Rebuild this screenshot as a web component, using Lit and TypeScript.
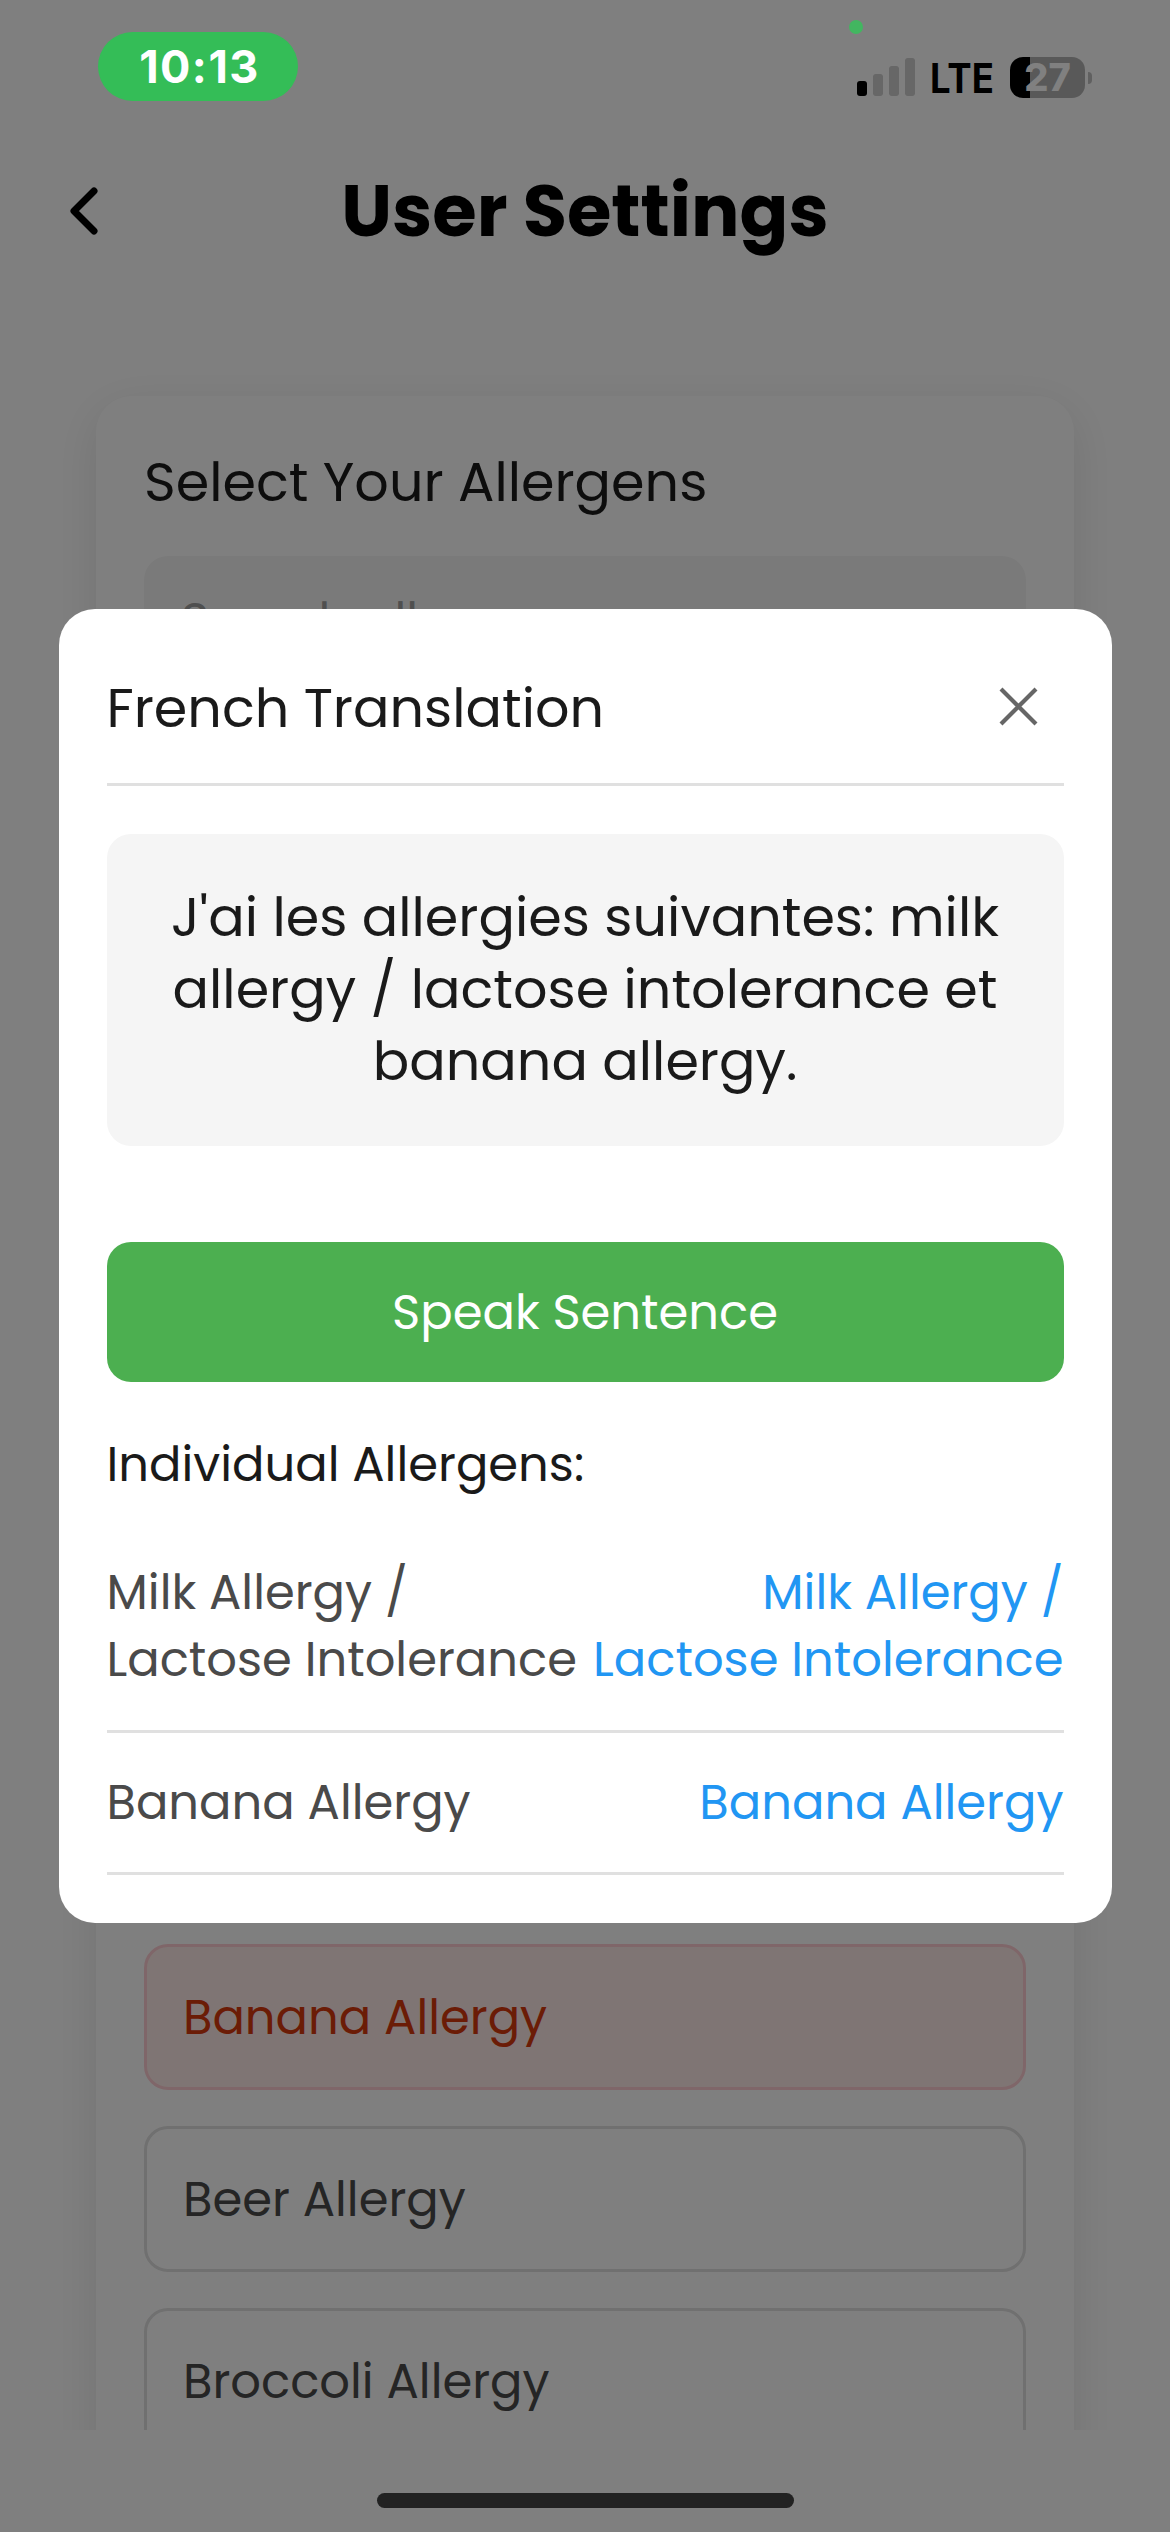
import { LitElement, html, css, svg } from "lit";
import { customElement, property } from "lit/decorators.js";
import { classMap } from "lit/directives/class-map.js";

interface Allergen {
  name: string;
  selected: boolean;
}

interface Translation {
  source: string;
  translated: string;
}

const ALLERGENS: Allergen[] = [
  { name: "Banana Allergy", selected: true },
  { name: "Beer Allergy", selected: false },
  { name: "Broccoli Allergy", selected: false },
];

const TRANSLATIONS: Translation[] = [
  {
    source: "Milk Allergy / Lactose Intolerance",
    translated: "Milk Allergy / Lactose Intolerance",
  },
  { source: "Banana Allergy", translated: "Banana Allergy" },
];

/** Clock pill, signal bars, carrier label and battery. */
@customElement("status-bar")
export class StatusBar extends LitElement {
  @property() time = "";
  @property() network = "";
  @property({ type: Number }) battery = 0;
  @property({ type: Number }) signal = 0;

  static styles = css`
    :host {
      display: flex;
      justify-content: space-between;
      align-items: flex-start;
      box-sizing: border-box;
      height: 140px;
      padding: 32px 78px 0 98px;
      font-family: Inter, "Liberation Sans", sans-serif;
    }
    .time {
      display: flex;
      align-items: center;
      justify-content: center;
      box-sizing: border-box;
      width: 200px;
      height: 69px;
      padding: 0 0 1px 3px;
      border-radius: 35px;
      background: #34bd57;
      color: #fff;
      font-size: 45px;
      font-weight: 650;
      letter-spacing: 1.5px;
    }
    .right {
      position: relative;
      display: flex;
      align-items: center;
      height: 41px;
      margin-top: 25px;
    }
    .dot {
      position: absolute;
      left: -8px;
      top: -37px;
      width: 14px;
      height: 14px;
      border-radius: 50%;
      background: #42b660;
    }
    .bars {
      width: 59px;
      height: 38px;
      margin-top: -2px;
    }
    .network {
      width: 64px;
      margin: 1px 0 0 14px;
      font-size: 41px;
      line-height: 41px;
      font-weight: 700;
      transform: scaleX(0.89);
      transform-origin: left;
    }
    .cell {
      display: flex;
      align-items: center;
      justify-content: center;
      width: 75px;
      height: 41px;
      margin-left: 16px;
      border-radius: 13px;
      background: linear-gradient(90deg, #000 27%, #595959 27%);
      color: #808080;
      font-size: 38px;
      font-weight: 800;
      line-height: 41px;
    }
    .nub {
      width: 4px;
      height: 12px;
      margin-left: 3px;
      border-radius: 0 4px 4px 0;
      background: #606060;
    }
  `;

  render() {
    const tops = [15, 8, 0, -8];
    return html`
      <div class="time">${this.time}</div>
      <div class="right">
        <i class="dot"></i>
        <svg class="bars" viewBox="0 -8 59 38">
          ${tops.map(
            (y, i) => svg`<rect x=${i * 16} y=${y} width="10" height=${30 - y} rx="3"
              fill=${i < this.signal ? "#000" : "#676767"} />`
          )}
        </svg>
        <span class="network">${this.network}</span>
        <span class="cell">${this.battery}</span>
        <i class="nub"></i>
      </div>
    `;
  }
}

/** The settings screen that lies behind the dialog. */
@customElement("settings-page")
export class SettingsPage extends LitElement {
  @property({ attribute: false }) allergens: Allergen[] = [];

  static styles = css`
    :host {
      display: flex;
      flex-direction: column;
      box-sizing: border-box;
      height: 2430px;
      padding-top: 157px;
      overflow: hidden;
      background: #fff;
    }
    .header {
      display: grid;
      grid-template-columns: 1fr auto 1fr;
      align-items: center;
      height: 108px;
      padding: 0 67px;
    }
    .back {
      width: 33px;
      height: 52px;
    }
    h1 {
      margin: 0;
      font-size: 72px;
      line-height: 108px;
      font-weight: 700;
      color: #000;
    }
    .card {
      flex: 1 0 auto;
      margin: 131px 96px 0;
      padding: 48px;
      border-radius: 36px;
      background: #fff;
      box-shadow: 0 12px 48px rgba(0, 0, 0, 0.1);
    }
    h2 {
      margin: 0;
      font-size: 54px;
      line-height: 76px;
      font-weight: 400;
      color: #1a1a1a;
    }
    .search {
      height: 138px;
      margin: 36px 0 1250px;
      padding: 0 37px;
      border-radius: 24px;
      background: #f5f5f5;
      color: #9e9e9e;
      font-size: 48px;
      line-height: 130px;
    }
    .list {
      display: flex;
      flex-direction: column;
      gap: 36px;
    }
    .item {
      box-sizing: border-box;
      height: 146px;
      padding: 0 36px;
      border: 3px solid #e0e0e0;
      border-radius: 24px;
      color: #4a4a4a;
      font-size: 48px;
      line-height: 142px;
    }
    .selected {
      border-color: #ffcdd2;
      background: #ffebe9;
      color: #d7380c;
    }
  `;

  render() {
    return html`
      <div class="header">
        <svg class="back" viewBox="0 0 33 52">
          <path d="M27 6 L7 26 L27 46" fill="none" stroke="#000" stroke-width="7"
            stroke-linecap="round" stroke-linejoin="round" />
        </svg>
        <h1>User Settings</h1>
      </div>
      <div class="card">
        <h2>Select Your Allergens</h2>
        <div class="search">Search allergens...</div>
        <div class="list">
          ${this.allergens.map(
            (a) => html`<div class=${classMap({ item: true, selected: a.selected })}>${a.name}</div>`
          )}
        </div>
      </div>
    `;
  }
}

/** Dialog with the translated sentence and each allergen's translation. */
@customElement("translation-dialog")
export class TranslationDialog extends LitElement {
  @property() heading = "";
  @property() sentence = "";
  @property({ attribute: false }) translations: Translation[] = [];

  static styles = css`
    :host {
      display: block;
      box-sizing: border-box;
      width: 90%;
      padding: 48px;
      border-radius: 36px;
      background: #fff;
      color: #1a1a1a;
      font-size: 48px;
      line-height: 67.5px;
    }
    .header {
      display: flex;
      justify-content: space-between;
      align-items: center;
      height: 99px;
      padding-bottom: 27px;
      border-bottom: 3px solid #e0e0e0;
    }
    h2 {
      margin: 0;
      padding-top: 5px;
      font-size: 54px;
      font-weight: 400;
    }
    .close {
      width: 39px;
      height: 39px;
      margin-right: 26px;
    }
    .sentence {
      margin: 48px 0 96px;
      padding: 47px 48px 49px;
      border-radius: 24px;
      background: #f5f5f5;
      font-size: 54px;
      line-height: 72px;
      text-align: center;
    }
    .speak {
      display: block;
      width: 100%;
      height: 140px;
      padding: 0;
      border: 0;
      border-radius: 24px;
      background: #4caf50;
      color: #fff;
      font: inherit;
      line-height: 142px;
    }
    h3 {
      margin: 49px 0 24px;
      font-size: 48px;
      font-weight: 400;
    }
    .row {
      display: flex;
      justify-content: space-between;
      padding: 36px 0;
      border-bottom: 3px solid #e0e0e0;
    }
    .row span {
      flex: 1;
      color: #4a4a4a;
    }
    .row .to {
      color: #2196f3;
      text-align: right;
    }
  `;

  render() {
    return html`
      <div class="header">
        <h2>${this.heading}</h2>
        <svg class="close" viewBox="0 0 39 39">
          <path d="M2 2 L37 37 M37 2 L2 37" stroke="#666" stroke-width="4.2" />
        </svg>
      </div>
      <div class="sentence">${this.sentence}</div>
      <button class="speak">Speak Sentence</button>
      <h3>Individual Allergens:</h3>
      ${this.translations.map(
        (t) => html`<div class="row"><span>${t.source}</span><span class="to">${t.translated}</span></div>`
      )}
    `;
  }
}

@customElement("app-root")
export class AppRoot extends LitElement {
  static styles = css`
    :host {
      display: block;
      position: relative;
      width: 1170px;
      height: 2532px;
      overflow: hidden;
      background: #fff;
      font-family: Poppins, Inter, "Liberation Sans", sans-serif;
    }
    .scrim {
      position: absolute;
      inset: 0;
      display: flex;
      align-items: center;
      justify-content: center;
      background: rgba(0, 0, 0, 0.5);
    }
    .status {
      position: absolute;
      inset: 0 0 auto;
    }
    .home {
      position: absolute;
      left: 377px;
      bottom: 24px;
      width: 417px;
      height: 15px;
      border-radius: 8px;
      background: #222;
    }
  `;

  render() {
    return html`
      <settings-page .allergens=${ALLERGENS}></settings-page>
      <div class="scrim">
        <translation-dialog
          heading="French Translation"
          sentence="J'ai les allergies suivantes: milk allergy / lactose intolerance et banana allergy."
          .translations=${TRANSLATIONS}
        ></translation-dialog>
      </div>
      <status-bar class="status" time="10:13" network="LTE" battery="27" signal="1"></status-bar>
      <div class="home"></div>
    `;
  }
}
